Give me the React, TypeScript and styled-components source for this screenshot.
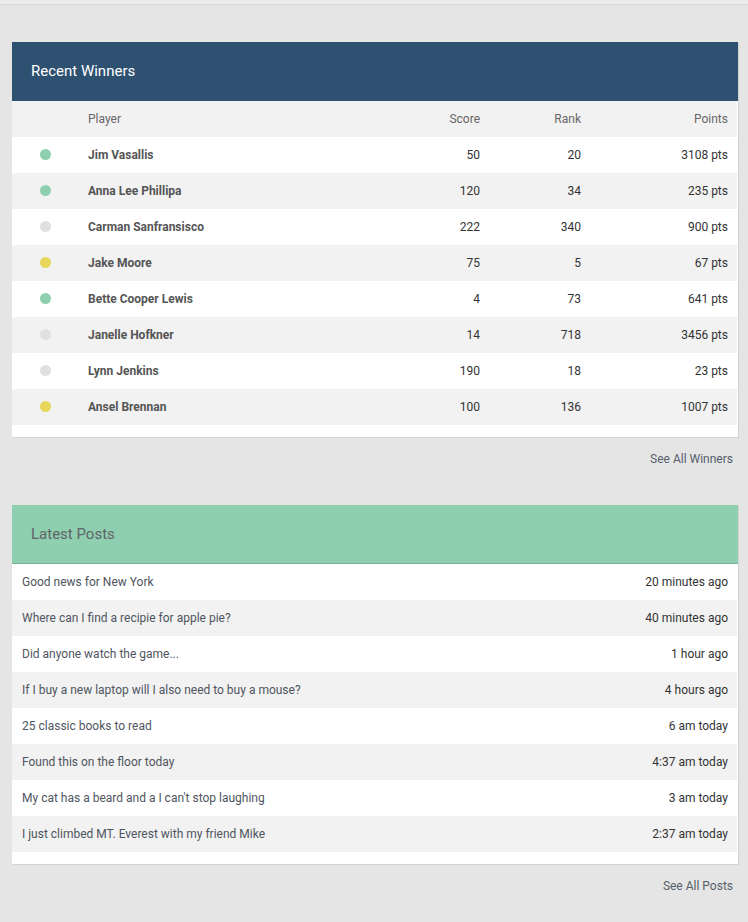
import React from "react";
import styled, { createGlobalStyle } from "styled-components";

const Global = createGlobalStyle`
  html, body { margin: 0; padding: 0; background: #e5e5e5; }
  body { font-family: Roboto, "Liberation Sans", sans-serif; -webkit-font-smoothing: antialiased; }
`;

const TopStrip = styled.div`
  height: 4px;
  background: #ececec;
  border-bottom: 1px solid #d9d9d9;
`;

const Page = styled.div`
  padding: 37px 10px 0 12px;
`;

const Card = styled.section`
  background: #fff;
  box-shadow: 1px 1px 1px rgba(0, 0, 0, 0.08);
  padding-bottom: 12px;
`;

const CardHeader = styled.header<{ $tone: "blue" | "green" }>`
  box-sizing: border-box;
  height: ${(p) => (p.$tone === "blue" ? "59px" : "59px")};
  display: flex;
  align-items: center;
  padding-left: 19px;
  padding-bottom: ${(p) => (p.$tone === "blue" ? "2px" : "0")};
  font-size: 15px;
  background: ${(p) => (p.$tone === "blue" ? "#2e5071" : "#8ecfb0")};
  color: ${(p) => (p.$tone === "blue" ? "#fff" : "#5f6366")};
  border-bottom: ${(p) => (p.$tone === "green" ? "1px solid #76b394" : "none")};
`;

const Grid = styled.div<{ $head?: boolean; $alt?: boolean }>`
  display: grid;
  grid-template-columns: 76px 1fr 100px 101px 156px;
  height: 36px;
  align-items: center;
  font-size: 12px;
  margin-right: 1px;
  background: ${(p) => (p.$head || p.$alt ? "#f2f2f2" : "#fff")};
  color: ${(p) => (p.$head ? "#666" : "#333")};
`;

const DotCell = styled.div`
  display: flex;
  padding-left: 28px;
  padding-bottom: 2px;
`;

const Dot = styled.span<{ $c: string }>`
  width: 11px;
  height: 11px;
  border-radius: 50%;
  background: ${(p) => p.$c};
`;

const Name = styled.div<{ $bold?: boolean }>`
  font-weight: ${(p) => (p.$bold ? 700 : 400)};
  color: ${(p) => (p.$bold ? "#555" : "inherit")};
`;

const Num = styled.div<{ $last?: boolean }>`
  text-align: right;
  padding-right: ${(p) => (p.$last ? "9px" : "0")};
`;

const MoreLink = styled.a<{ $gapTop: number; $gapBottom: number }>`
  display: block;
  text-align: right;
  font-size: 12px;
  line-height: 16px;
  color: #55606b;
  text-decoration: none;
  padding-right: 5px;
  margin: ${(p) => `${p.$gapTop}px 0 ${p.$gapBottom}px`};
`;

const PostRow = styled.div<{ $alt?: boolean }>`
  display: flex;
  justify-content: space-between;
  align-items: center;
  height: 36px;
  padding: 0 9px 0 10px;
  margin-right: 1px;
  font-size: 12px;
  background: ${(p) => (p.$alt ? "#f2f2f2" : "#fff")};
`;

const PostTitle = styled.span`
  color: #4f5560;
`;

const PostTime = styled.span`
  color: #333;
`;

const C = { g: "#8ecfb0", n: "#e0e0e0", y: "#e8d75a" };

const winners = [
  { c: C.g, name: "Jim Vasallis", score: 50, rank: 20, pts: 3108 },
  { c: C.g, name: "Anna Lee Phillipa", score: 120, rank: 34, pts: 235 },
  { c: C.n, name: "Carman Sanfransisco", score: 222, rank: 340, pts: 900 },
  { c: C.y, name: "Jake Moore", score: 75, rank: 5, pts: 67 },
  { c: C.g, name: "Bette Cooper Lewis", score: 4, rank: 73, pts: 641 },
  { c: C.n, name: "Janelle Hofkner", score: 14, rank: 718, pts: 3456 },
  { c: C.n, name: "Lynn Jenkins", score: 190, rank: 18, pts: 23 },
  { c: C.y, name: "Ansel Brennan", score: 100, rank: 136, pts: 1007 },
];

const posts = [
  ["Good news for New York", "20 minutes ago"],
  ["Where can I find a recipie for apple pie?", "40 minutes ago"],
  ["Did anyone watch the game...", "1 hour ago"],
  ["If I buy a new laptop will I also need to buy a mouse?", "4 hours ago"],
  ["25 classic books to read", "6 am today"],
  ["Found this on the floor today", "4:37 am today"],
  ["My cat has a beard and a I can't stop laughing", "3 am today"],
  ["I just climbed MT. Everest with my friend Mike", "2:37 am today"],
];

export default function App() {
  return (
    <>
      <Global />
      <TopStrip />
      <Page>
        <Card>
          <CardHeader $tone="blue">Recent Winners</CardHeader>
          <Grid $head>
            <div />
            <Name>Player</Name>
            <Num>Score</Num>
            <Num>Rank</Num>
            <Num $last>Points</Num>
          </Grid>
          {winners.map((w, i) => (
            <Grid key={w.name} $alt={i % 2 === 1}>
              <DotCell>
                <Dot $c={w.c} />
              </DotCell>
              <Name $bold>{w.name}</Name>
              <Num>{w.score}</Num>
              <Num>{w.rank}</Num>
              <Num $last>{w.pts} pts</Num>
            </Grid>
          ))}
        </Card>
        <MoreLink href="#" $gapTop={14} $gapBottom={38}>
          See All Winners
        </MoreLink>
        <Card>
          <CardHeader $tone="green">Latest Posts</CardHeader>
          {posts.map(([t, time], i) => (
            <PostRow key={t} $alt={i % 2 === 1}>
              <PostTitle>{t}</PostTitle>
              <PostTime>{time}</PostTime>
            </PostRow>
          ))}
        </Card>
        <MoreLink href="#" $gapTop={14} $gapBottom={20}>
          See All Posts
        </MoreLink>
      </Page>
    </>
  );
}
